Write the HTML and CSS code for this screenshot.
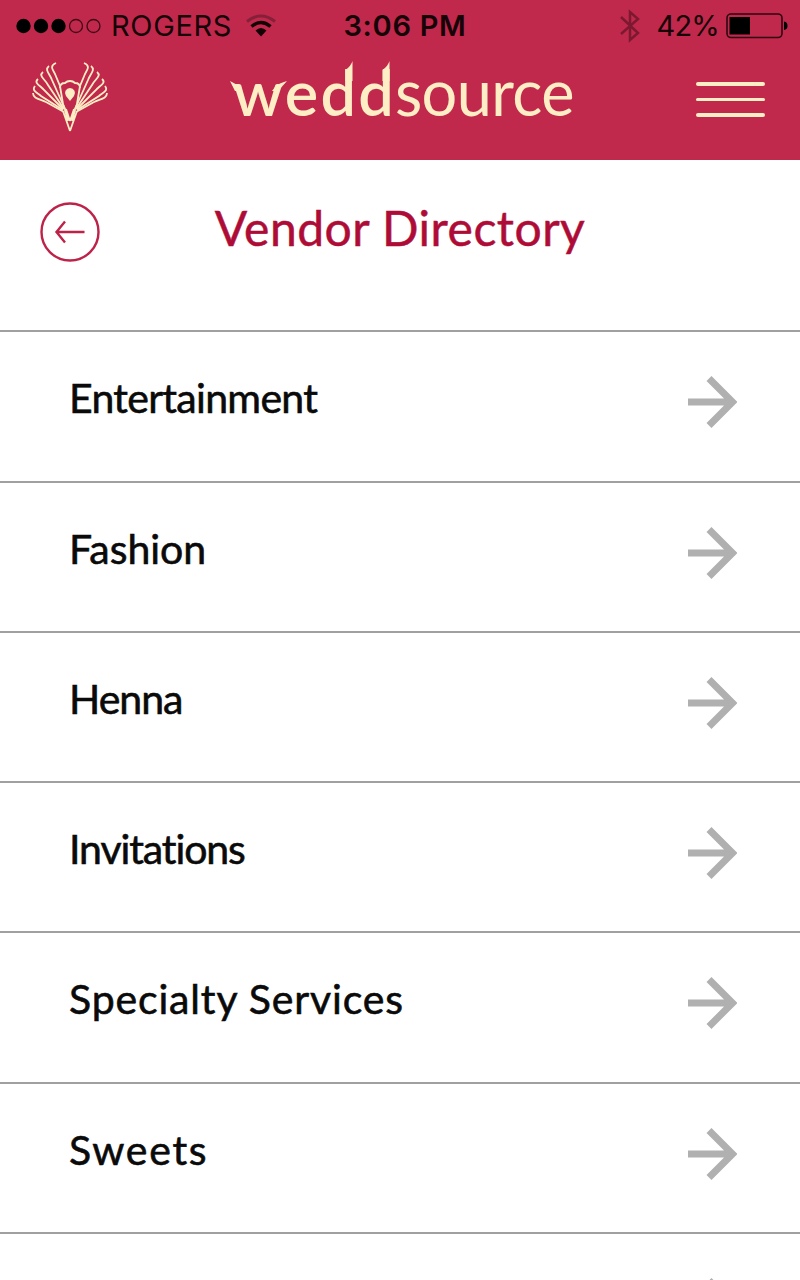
FILE: index.html
```html
<!DOCTYPE html>
<html lang="en">
<head>
    <meta charset="UTF-8">
    <meta name="viewport" content="width=device-width, initial-scale=1.0">
    <title>Weddsource - Vendor Directory</title>
    <link rel="stylesheet" href="styles.css">
</head>
<body>
    <header class="header">
        <div class="status-bar">
            <div class="status-left">
                <svg class="signal" viewBox="0 0 86 16">
                    <circle cx="7.5" cy="8" r="7.2"/>
                    <circle cx="25" cy="8" r="7.2"/>
                    <circle cx="42.5" cy="8" r="7.2"/>
                    <circle class="empty" cx="60" cy="8" r="6.5"/>
                    <circle class="empty" cx="77.5" cy="8" r="6.5"/>
                </svg>
                <span class="carrier">ROGERS</span>
                <svg class="wifi" viewBox="0 0 32 24">
                    <path class="faded" d="M2 7.5Q16-3.5 30 7.5"/>
                    <path d="M6.5 12.5Q16 4.5 25.5 12.5"/>
                    <path class="dot" d="M10.5 16.5Q16 11.5 21.5 16.5L16 22.5Z"/>
                </svg>
            </div>
            <span class="time">3:06 PM</span>
            <div class="status-right">
                <svg class="bluetooth" viewBox="0 0 20 34">
                    <path d="M1 8L18 24L10 31V3L18 10L1 25"/>
                </svg>
                <span class="percent">42%</span>
                <svg class="battery" viewBox="0 0 62 26">
                    <rect class="shell" x="1" y="1" width="55" height="23.5" rx="4"/>
                    <rect x="3.5" y="4" width="20.5" height="17.5"/>
                    <path d="M58 8.5Q61.5 9 61.5 12.7T58 17Z"/>
                </svg>
            </div>
        </div>
        <div class="nav-bar">
            <svg class="emblem" viewBox="0 0 76 72">
                <g id="wing">
                    <path d="M24 2C17 5 21 9 23 13L28 25L31 43L34 51"/>
                    <path d="M17 5C12 9 18 13 20 19L33 48"/>
                    <path d="M11 11C6 15 13 18 16 24L32 48"/>
                    <path d="M6 18C1 22 9 25 12 29L31 48"/>
                    <path d="M3 25C-1 30 6 32 9 35L31 49"/>
                    <path d="M1 32C1 38 9 38 14 41L32 51"/>
                    <path d="M28 27Q28 22 33 22Q35 20 38 20"/>
                    <path d="M31 50L38 70M33 49L36 60M34 48L38 60"/>
                </g>
                <use href="#wing" transform="matrix(-1 0 0 1 76 0)"/>
                <path class="drop" d="M38 27a5 5 0 0 1 4 8L38 40L34 35a5 5 0 0 1 4-8Z"/>
            </svg>
            <div class="logo">
                <span class="logo-bold">wedd</span><span class="logo-light">source</span>
                <svg class="logo-tips" viewBox="0 0 344 60">
                    <path d="M0 20L11 26L12 30H5ZM57 20Q49 22 45 26L42 30H48ZM122.500 0Q121 5 115.500 9V20H122.500ZM159.500 0Q158 5 152.500 9V20H159.500Z"/>
                </svg>
            </div>
            <div class="menu">
                <span></span>
                <span></span>
                <span></span>
            </div>
        </div>
    </header>

    <div class="title-bar">
        <svg class="back" viewBox="0 0 60 60">
            <circle cx="30" cy="30" r="28.5"/>
            <path d="M44.5 30H16.5M25 19.5L16.5 30L25 40.5"/>
        </svg>
        <h1>Vendor Directory</h1>
    </div>

    <ul class="vendors">
        <li>
            <span class="entertainment">Entertainment</span>
            <svg class="arrow" viewBox="0 0 50 54"><path d="M1 27H45M22 3.5L45.5 27L22 50.5"/></svg>
        </li>
        <li>
            <span class="fashion">Fashion</span>
            <svg class="arrow" viewBox="0 0 50 54"><path d="M1 27H45M22 3.5L45.5 27L22 50.5"/></svg>
        </li>
        <li>
            <span class="henna">Henna</span>
            <svg class="arrow" viewBox="0 0 50 54"><path d="M1 27H45M22 3.5L45.5 27L22 50.5"/></svg>
        </li>
        <li>
            <span class="invitations">Invitations</span>
            <svg class="arrow" viewBox="0 0 50 54"><path d="M1 27H45M22 3.5L45.5 27L22 50.5"/></svg>
        </li>
        <li>
            <span class="specialty">Specialty Services</span>
            <svg class="arrow" viewBox="0 0 50 54"><path d="M1 27H45M22 3.5L45.5 27L22 50.5"/></svg>
        </li>
        <li>
            <span class="sweets">Sweets</span>
            <svg class="arrow" viewBox="0 0 50 54"><path d="M1 27H45M22 3.5L45.5 27L22 50.5"/></svg>
        </li>
        <li class="peek">
            <svg class="arrow" viewBox="0 0 50 54"><path d="M1 27H45M22 3.5L45.5 27L22 50.5"/></svg>
        </li>
    </ul>
</body>
</html>
```

FILE: styles.css
```css
:root {
    --red: #c0294b;
    --title: #ae0c37;
    --cream: #fdeec6;
    --line: #a0a0a0;
}

* {
    box-sizing: border-box;
    margin: 0;
    padding: 0;
}

body {
    background: #fff;
    font-family: Lato, sans-serif;
    font-variant-ligatures: none;
}

svg {
    display: block;
    flex: none;
}

.header {
    height: 160px;
    background: var(--red);
}

/* Status bar */
.status-bar {
    display: grid;
    grid-template-columns: 1fr auto 1fr;
    align-items: center;
    height: 52px;
    padding: 0 12px 0 16px;
    font-family: Inter, sans-serif;
    font-size: 29px;
    line-height: 52px;
    color: #160308;
}

.status-left,
.status-right {
    display: flex;
    align-items: center;
}

.status-right {
    justify-content: flex-end;
}

.signal {
    width: 86px;
    height: 16px;
}

.signal .empty {
    fill: none;
    stroke: #3d0916;
    stroke-width: 1.3;
}

.carrier {
    margin-left: 9px;
    letter-spacing: 0.65px;
}

.wifi {
    width: 32px;
    height: 24px;
    margin-left: 13px;
}

.wifi path {
    fill: none;
    stroke: #120206;
    stroke-width: 3.5;
}

.wifi .faded {
    stroke: #86203a;
    stroke-width: 3;
}

.wifi .dot {
    fill: #120206;
    stroke: none;
}

.time {
    padding-left: 6px;
    font-weight: 600;
    letter-spacing: 0.7px;
}

.bluetooth {
    width: 20px;
    height: 34px;
    fill: none;
    stroke: #7c1931;
    stroke-width: 2.5;
}

.percent {
    margin-left: 17px;
    letter-spacing: -0.8px;
}

.battery {
    width: 62px;
    height: 26px;
    margin-left: 7px;
}

.battery .shell {
    fill: none;
    stroke: #2c0711;
    stroke-width: 1.6;
}

/* Logo and menu */
.nav-bar {
    display: flex;
    padding: 9px 35px 0 32px;
}

.emblem {
    width: 76px;
    height: 72px;
    fill: none;
    stroke: var(--cream);
    stroke-width: 1.8;
}

.emblem .drop {
    fill: var(--cream);
    stroke: none;
}

.logo {
    position: relative;
    width: 344px;
    height: 60px;
    margin-left: 122px;
    padding-left: 3px;
    white-space: nowrap;
    font-size: 63px;
    line-height: 62px;
    color: var(--cream);
}

.logo-bold {
    font-weight: 600;
    letter-spacing: 2.2px;
}

.logo-light {
    margin-left: -1px;
    letter-spacing: -0.6px;
}

.logo-tips {
    position: absolute;
    top: 0;
    left: 0;
    width: 344px;
    height: 60px;
    fill: var(--cream);
}

.menu {
    display: flex;
    flex-direction: column;
    gap: 12px;
    margin-left: auto;
    padding-top: 21px;
}

.menu span {
    width: 69px;
    height: 3.5px;
    border-radius: 2px;
    background: var(--cream);
}

/* Title */
.title-bar {
    display: grid;
    grid-template-columns: 60px 1fr 60px;
    height: 170.4px;
    padding: 42px 40px 0;
}

.back {
    width: 60px;
    height: 60px;
    fill: none;
    stroke: #bd2348;
    stroke-width: 2.4;
}

.title-bar h1 {
    font-size: 48px;
    font-weight: 400;
    line-height: 52px;
    letter-spacing: 0.5px;
    text-align: center;
    color: var(--title);
    -webkit-text-stroke: 0.5px var(--title);
}

/* Vendor list */
.vendors {
    list-style: none;
}

.vendors li {
    display: flex;
    justify-content: space-between;
    height: 150.25px;
    padding: 43px 63px 0 69px;
    border-top: 2px solid var(--line);
    font-size: 41px;
    line-height: 46px;
    color: #0a0a0a;
    -webkit-text-stroke: 0.6px #0a0a0a;
}

.vendors .peek {
    justify-content: flex-end;
    height: 48px;
    overflow: hidden;
}

.entertainment {
    letter-spacing: -0.7px;
}

.henna {
    letter-spacing: -1px;
}

.invitations {
    letter-spacing: -1.1px;
}

.specialty {
    letter-spacing: 0.85px;
}

.sweets {
    letter-spacing: 1.7px;
}

.arrow {
    width: 50px;
    height: 54px;
    fill: none;
    stroke: #b0b0b0;
    stroke-width: 7;
}
```
